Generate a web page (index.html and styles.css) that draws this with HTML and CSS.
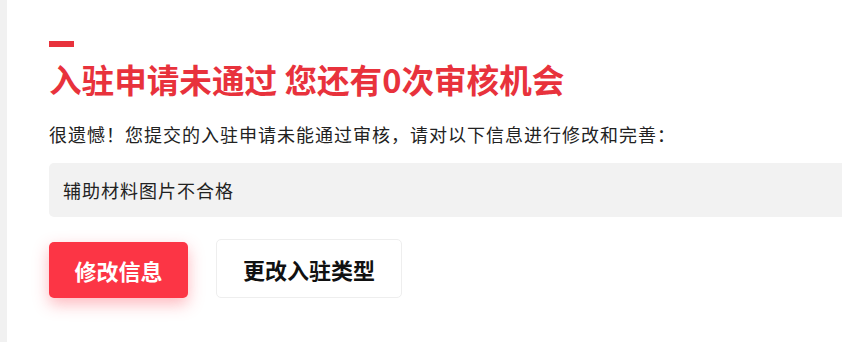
FILE: index.html
```html
<!DOCTYPE html>
<html lang="zh-CN">
<head>
<meta charset="utf-8">
<title>入驻申请未通过</title>
<link rel="stylesheet" href="styles.css">
</head>
<body>
<div class="page">
  <aside class="rail"></aside>
  <main class="content">
    <div class="dash"></div>
    <h1 class="title">入驻申请未通过 您还有0次审核机会</h1>
    <p class="desc">很遗憾！您提交的入驻申请未能通过审核，请对以下信息进行修改和完善：</p>
    <div class="reason">辅助材料图片不合格</div>
    <div class="actions">
      <button class="btn btn-primary">修改信息</button>
      <button class="btn btn-default">更改入驻类型</button>
    </div>
  </main>
</div>
</body>
</html>
```
FILE: styles.css
```css
html, body {
  margin: 0;
  padding: 0;
  background: #ffffff;
  overflow: hidden;
}
body {
  font-family: "Noto Sans CJK SC", "Noto Sans", sans-serif;
  color: #222;
}
.page {
  display: flex;
  width: 1000px;
  height: 342px;
}
.rail {
  width: 7px;
  flex: none;
  background: #f1f1f1;
}
.content {
  flex: 1;
  padding: 41px 0 0 42px;
}
.dash {
  width: 25px;
  height: 6px;
  background: #e8323c;
}
.title {
  margin: 12px 0 0;
  font-size: 32.6px;
  line-height: 40px;
  font-weight: 700;
  color: #e8323c;
  letter-spacing: 0;
}
.desc {
  margin: 22px 0 0;
  font-size: 18px;
  line-height: 26px;
  letter-spacing: 1px;
  color: #222;
}
.reason {
  margin-top: 16px;
  height: 54px;
  display: flex;
  align-items: center;
  padding-left: 14px;
  background: #f2f2f2;
  border-radius: 5px;
  font-size: 18px;
  letter-spacing: 1px;
  color: #222;
}
.actions {
  margin-top: 22px;
  display: flex;
  align-items: flex-end;
  gap: 28px;
}
.btn {
  font-family: inherit;
  font-weight: 700;
  font-size: 22px;
  border-radius: 5px;
  cursor: pointer;
  padding: 0;
  box-sizing: border-box;
}
.btn-primary {
  width: 139px;
  height: 56px;
  background: #fc3545;
  color: #fff;
  border: none;
  box-shadow: 0 6px 16px rgba(252, 53, 69, 0.35);
}
.btn-default {
  width: 186px;
  height: 59px;
  background: #fff;
  color: #111;
  border: 1px solid #eeeeee;
}
```
